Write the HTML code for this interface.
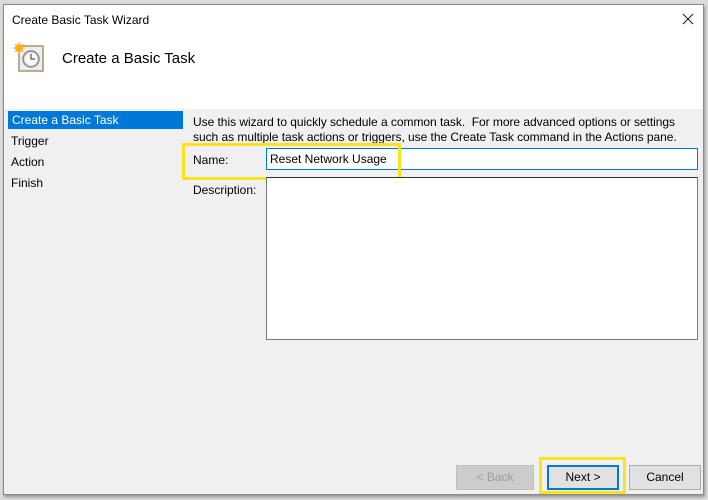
<!DOCTYPE html>
<html><head><style>
*{margin:0;padding:0;box-sizing:border-box}
body{width:708px;height:500px;background:#dcdcdc;font-family:"Liberation Sans",sans-serif;font-size:12px;color:#000;position:relative;overflow:hidden}
.win{position:absolute;left:3px;top:4px;width:701px;height:491px;background:#f0f0f0;border:1px solid #8a8a8a;box-shadow:1px 2px 3px rgba(0,0,0,.35)}
.hdr{position:absolute;left:0;top:0;width:699px;height:104px;background:#fff}
.a{position:absolute;white-space:nowrap}
.btn{position:absolute;height:25px;border:1px solid #adadad;background:#e1e1e1;text-align:center;line-height:23px;font-size:12px}
.y{position:absolute;border:3px solid #f7e41c}
</style></head><body>
<div class="win">
 <div class="hdr">
  <div class="a" style="left:8px;top:8px;font-size:12px">Create Basic Task Wizard</div>
  <svg class="a" style="left:678px;top:8px" width="12" height="12" viewBox="0 0 12 12"><path d="M1 1L11 11M11 1L1 11" stroke="#222" stroke-width="1.1"/></svg>
  <svg class="a" style="left:8px;top:37px" width="34" height="34" viewBox="0 0 34 34">
   <rect x="7" y="4" width="24" height="25" fill="#eee" stroke="#a89070" stroke-width="1.5"/>
   <circle cx="19" cy="17" r="8" fill="#ddd" stroke="#888" stroke-width="1.5"/>
   <circle cx="19" cy="17" r="6" fill="#f8f8f8"/>
   <path d="M19 12v5h4" stroke="#555" stroke-width="1.2" fill="none"/>
   <circle cx="7" cy="6" r="4" fill="#fbb01a"/>
   <path d="M7 0v12M1 6h12M3 2l8 8M11 2l-8 8" stroke="#fbb01a" stroke-width="1"/>
  </svg>
  <div class="a" style="left:58px;top:45px;font-size:15px">Create a Basic Task</div>
 </div>
 <div class="a" style="left:4px;top:106px;width:175px;height:18px;background:#0078d7;color:#fff;padding:2px 0 0 4px">Create a Basic Task</div>
 <div class="a" style="left:7px;top:129px">Trigger</div>
 <div class="a" style="left:7px;top:150px">Action</div>
 <div class="a" style="left:7px;top:171px">Finish</div>
 <div class="a" style="left:189px;top:110px;line-height:15px;letter-spacing:-0.04px">Use this wizard to quickly schedule a common task.&nbsp; For more advanced options or settings<br>such as multiple task actions or triggers, use the Create Task command in the Actions pane.</div>
 <div class="a" style="left:189px;top:148px">Name:</div>
 <div class="a" style="left:262px;top:143px;width:432px;height:22px;background:#fff;border:1px solid #0078d7;padding:3px 0 0 3px">Reset Network Usage</div>
 <div class="y" style="left:178px;top:138px;width:219px;height:37px"></div>
 <div class="a" style="left:189px;top:178px">Description:</div>
 <div class="a" style="left:262px;top:172px;width:432px;height:163px;background:#fff;border:1px solid #7a7a7a;border-top-color:#333"></div>
 <div class="btn" style="left:452px;top:460px;width:78px;color:#9c9c9c;background:#cccccc;border-color:#bfbfbf">&lt; Back</div>
 <div class="btn" style="left:543px;top:460px;width:72px;border:2px solid #0078d7;line-height:21px">Next &gt;</div>
 <div class="y" style="left:535px;top:452px;width:87px;height:37px"></div>
 <div class="btn" style="left:625px;top:460px;width:72px">Cancel</div>
</div>
</body></html>
